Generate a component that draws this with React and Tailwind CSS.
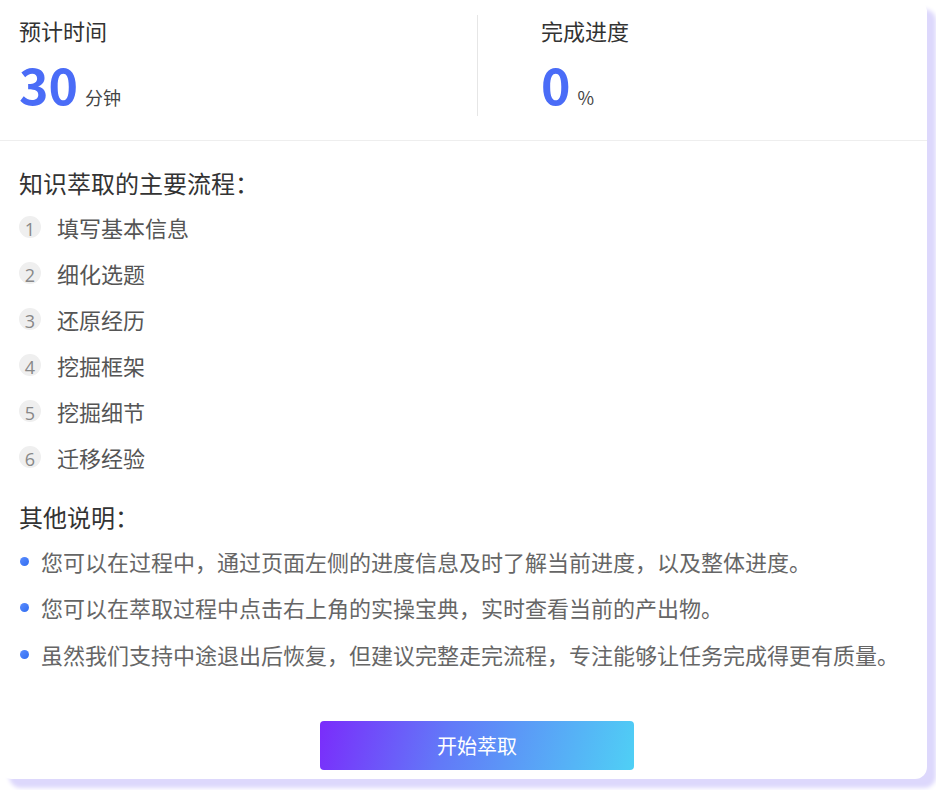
import React from 'react';

const steps = ['填写基本信息', '细化选题', '还原经历', '挖掘框架', '挖掘细节', '迁移经验'];

const notes = [
  '您可以在过程中，通过页面左侧的进度信息及时了解当前进度，以及整体进度。',
  '您可以在萃取过程中点击右上角的实操宝典，实时查看当前的产出物。',
  '虽然我们支持中途退出后恢复，但建议完整走完流程，专注能够让任务完成得更有质量。',
];

const font = { fontFamily: '"Microsoft YaHei", "Noto Sans CJK SC", "Noto Sans", sans-serif' };

const App = () => {
  return (
    <div className="w-[936px] h-[790px] bg-white" style={font}>
      <div className="w-[927px] h-[779px] bg-white rounded-xl shadow-[9px_9px_4px_#ddd8fc] flex flex-col">
        {/* Stats */}
        <div className="h-[141px] border-b border-[#eeeeee] flex items-stretch">
          <div className="w-[477px] pl-[19px] pt-[15px]">
            <div className="text-[22px] leading-[30px] text-[#333]">预计时间</div>
            <div className="flex items-baseline mt-[13px]">
              <span className="text-[50px] leading-none font-bold text-[#4a6cf7]">30</span>
              <span className="ml-[7px] text-[18px] text-[#444]">分钟</span>
            </div>
          </div>
          <div className="w-px bg-[#e6e6e6] my-[15px] h-[101px]" />
          <div className="flex-1 pl-[63px] pt-[15px]">
            <div className="text-[22px] leading-[30px] text-[#333]">完成进度</div>
            <div className="flex items-baseline mt-[13px]">
              <span className="text-[50px] leading-none font-bold text-[#4a6cf7]">0</span>
              <span className="ml-[7px] text-[18px] text-[#444]">%</span>
            </div>
          </div>
        </div>

        {/* Steps */}
        <div className="pl-[19px] pt-[26px]">
          <h3 className="text-[24px] leading-[32px] text-[#333]">知识萃取的主要流程：</h3>
          <ul className="mt-[5px]">
            {steps.map((s, i) => (
              <li key={s} className="h-[46px] flex items-center">
                <span className="w-[22px] h-[22px] pt-[3px] rounded-full bg-[#efefef] text-[#888] text-[18px] leading-none flex items-center justify-center" style={{ fontFamily: '"Open Sans", sans-serif' }}>
                  {i + 1}
                </span>
                <span className="ml-[16px] text-[22px] text-[#555]">{s}</span>
              </li>
            ))}
          </ul>

          <h3 className="mt-[21px] text-[24px] leading-[32px] text-[#333]">其他说明：</h3>
          <ul className="mt-[5px]">
            {notes.map((n) => (
              <li key={n} className="h-[46.5px] flex items-center">
                <span className="w-[9px] h-[9px] rounded-full bg-gradient-to-br from-[#5b8dff] to-[#2f6cf0] ml-[1px]" />
                <span className="ml-[12px] text-[22px] text-[#666]">{n}</span>
              </li>
            ))}
          </ul>
        </div>

        <div className="mt-auto pb-[9px] pl-[320px]">
          <button className="w-[314px] h-[49px] rounded-[4px] bg-[linear-gradient(105deg,#7a2cfb_0%,#6279f8_40%,#4fd0f5_100%)] text-white text-[20px]">
            开始萃取
          </button>
        </div>
      </div>
    </div>
  );
};

export default App;
